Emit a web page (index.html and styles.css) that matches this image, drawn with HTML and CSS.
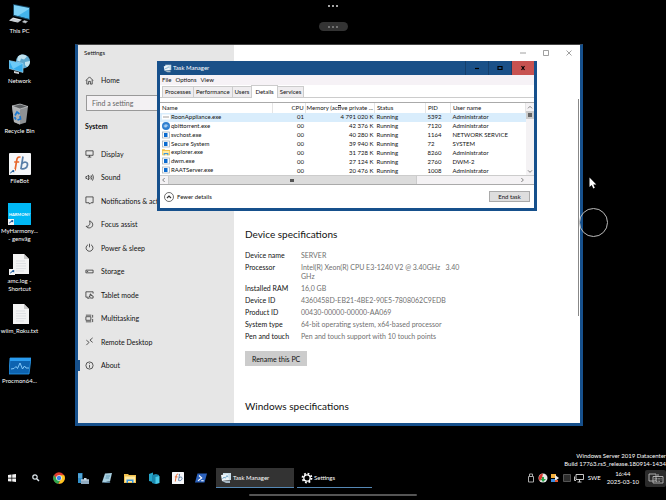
FILE: index.html
```html
<!DOCTYPE html>
<html lang="en">
  <head>
    <meta charset="UTF-8" />
    <meta name="viewport" content="width=device-width, initial-scale=1.0" />
    <title>Remote Desktop</title>
    <link rel="stylesheet" href="styles.css" />
  </head>
  <body>
    <!-- Shared icons -->
    <svg class="sprite" aria-hidden="true">
      <symbol id="i-arrow" viewBox="0 0 6 6">
        <path d="M0 0h6v6H0z" fill="#f4f4f4" />
        <path d="M1.2 5c0-1.600.7-2.500 2-2.700V1.200L5.200 1v2.600l-.9-.5C3.200 3.100 2.200 3.600 1.200 5z" fill="#1b5a9c" />
      </symbol>
      <symbol id="i-fb" viewBox="0 0 22 22">
        <rect width="22" height="22" rx="1" fill="#f6f7f9" />
        <path d="M11.500 4.300c-2.600-1-3.400.7-3.800 3L6 17.500M5.200 9h5" fill="none" stroke="#e8672b" stroke-width="1.700" />
        <path d="M14 3.500l-2 12c3 1.300 6-.5 6.500-3.500.4-3-3-3.800-5.500-1.500" fill="none" stroke="#5a7fa8" stroke-width="1.700" />
      </symbol>
      <symbol id="i-doc" viewBox="0 0 16 20">
        <path d="M0 0h11l5 5v15H0z" fill="#f3f3f3" />
        <path d="M11 0v5h5z" fill="#c9c9c9" />
        <path d="M3 7h9M3 9.500h10M3 12h10M3 14.500h10M3 17h8" stroke="#d6d8dc" stroke-width=".7" />
      </symbol>
      <symbol id="i-exe" viewBox="0 0 8 7">
        <rect x=".5" y=".5" width="7" height="6" fill="#fff" stroke="#9aa9b8" stroke-width=".7" />
        <rect x="2" y="1.500" width="3.500" height="4" fill="#0a6bd0" />
      </symbol>
      <symbol id="i-folder" viewBox="0 0 12 10">
        <path d="M0 1h4l1 1h7v8H0z" fill="#f2c14e" />
        <path d="M1 3.500h10V9H1z" fill="#ffe9a2" />
        <path d="M2.500 10V6.500h7V10H8V8H4v2z" fill="#3a97dd" />
      </symbol>
      <symbol id="i-tm" viewBox="0 0 12 12">
        <path d="M3 1h8v7H3z" fill="#c8dce8" />
        <path d="M1 3l7-1 1 6-7 1z" fill="#eef5f9" />
        <path d="M2.500 7l1.500-2 1.300 1.200L7 3.500l1 1.700" fill="none" stroke="#5d9cc4" stroke-width=".8" />
        <path d="M2 9l4 2h4V8.500z" fill="#a7b8c4" />
      </symbol>
    </svg>

    <main class="desktop">
      <nav class="shortcuts" aria-label="Desktop">
        <a href="#" class="shortcut">
          <svg viewBox="0 0 22 22">
            <path d="M5 2l15 3v11L5 12z" fill="#43b4ec" />
            <path d="M5 2l15 3v1L9 12.800 5 12z" fill="#7fd2f7" />
            <path d="M4.500 1.500L20.500 4.600V16.500L4.500 12.500z" fill="none" stroke="#2878a8" stroke-width=".6" />
            <path d="M4 14.500l9 2.300-4.500 2.700L0 17.500z" fill="#e4e8eb" />
            <path d="M2 17.200l8 1.800M3 16l8 2M15 17.500l3.500 1-2 1.500-3-1z" stroke="#a5adb3" stroke-width=".6" fill="#ccd1d5" />
          </svg>
          <span>This PC</span>
        </a>
        <a href="#" class="shortcut">
          <svg viewBox="0 0 22 22">
            <circle cx="14" cy="8.500" r="7" fill="#5ea8cf" />
            <path d="M9 3.500c3-3 7-2 9 0l-3 3-3-1-1 3-3-1zM16 9l5-1c0 3-1 5-3 6l-2-2z" fill="#c0e2ef" />
            <path d="M0 7.500l14 3v9L0 15.500z" fill="#36aceb" stroke="#b5dff2" stroke-width=".6" />
            <path d="M.5 8l13 2.800L4 16z" fill="#6dcbf8" />
            <path d="M5 18l5 1.300v1.700l-5-1z" fill="#ccd1d5" />
          </svg>
          <span>Network</span>
        </a>
        <a href="#" class="shortcut">
          <svg viewBox="0 0 22 22">
            <path d="M3 3l8-2 8 2.500-2 16-6.500 2L5 19z" fill="#8e9194" />
            <path d="M3 3l8 3v15.500L5 19z" fill="#b1b3b5" />
            <path d="M3 3l8-2 8 2.500L11 6z" fill="#5a5d60" stroke="#d7d9da" stroke-width=".6" />
            <path d="M6 12.500L8 9l2.500 2M11 13l.5 3-3 1M7 16.500L5.500 14" fill="none" stroke="#1b78d0" stroke-width="1.700" />
          </svg>
          <span>Recycle Bin</span>
        </a>
        <a href="#" class="shortcut">
          <svg viewBox="0 0 22 22">
            <use href="#i-fb" width="22" height="22" />
            <use href="#i-arrow" y="16" width="6" height="6" />
          </svg>
          <span>FileBot</span>
        </a>
        <a href="#" class="shortcut">
          <span class="harmony">HARMONY<svg viewBox="0 0 6 6"><use href="#i-arrow" /></svg></span>
          <span>MyHarmony...<br />- genväg</span>
        </a>
        <a href="#" class="shortcut">
          <svg viewBox="0 0 22 22">
            <use href="#i-doc" x="4" y="1" width="16" height="20" />
            <use href="#i-arrow" y="16" width="6" height="6" />
          </svg>
          <span>amc.log -<br />Shortcut</span>
        </a>
        <a href="#" class="shortcut">
          <svg viewBox="0 0 22 22"><use href="#i-doc" x="4" y="1" width="16" height="20" /></svg>
          <span>wiim_Roku.txt</span>
        </a>
        <a href="#" class="shortcut">
          <svg viewBox="0 0 22 22">
            <path d="M1 5h21l-2 16H0z" fill="#0d63b0" stroke="#2a9cf0" stroke-width=".8" />
            <path d="M1 5h21l-.4 3H1z" fill="#2a9cf0" />
            <path d="M2 16l3-.5 2-2 1.500 2L11 10l2.500 6 2-3 1.500 2h3" fill="none" stroke="#8fd3ff" stroke-width=".9" />
          </svg>
          <span>Procmon64...</span>
        </a>
      </nav>

      <!-- Session controls -->
      <div class="session-bar">
        <span class="dots"><i></i><i></i><i></i></span>
        <button class="session-pill dots" aria-label="Session menu"><i></i><i></i><i></i></button>
      </div>

      <!-- Settings window -->
      <section class="window settings">
        <aside class="sidebar">
          <header>Settings</header>
          <a href="#" class="nav-item home">
            <svg viewBox="0 0 10 10"><path d="M1 5l4-4 4 4M2 4.300V9h2V6h2v3h2V4.300" /></svg>Home
          </a>
          <input class="search" type="text" placeholder="Find a setting" aria-label="Find a setting" />
          <h2>System</h2>
          <nav class="nav-list">
            <a href="#" class="nav-item"><svg viewBox="0 0 10 10"><path d="M1 2h8v5H1zM5 7v2M3 9h4" /></svg>Display</a>
            <a href="#" class="nav-item"><svg viewBox="0 0 10 10"><path d="M1 4h1.200L4 2.200v5.600L2.200 6H1zM5.300 3.500q1 1.500 0 3M6.800 2.500q1.700 2.500 0 5M8.300 1.500q2.400 3.500 0 7" /></svg>Sound</a>
            <a href="#" class="nav-item"><svg viewBox="0 0 10 10"><path d="M1 1h8v6.500H6.500L5 9 4.500 7.500H1z" /></svg>Notifications &amp; actions</a>
            <a href="#" class="nav-item"><svg viewBox="0 0 10 10"><path d="M5 1c4 1 5 6 1.200 7.500C4 9.300 2 8.500 1.300 7 5 7.500 6.300 4 5 1z" /></svg>Focus assist</a>
            <a href="#" class="nav-item"><svg viewBox="0 0 10 10"><path d="M3.300 2a3.800 3.800 0 1 0 3.400 0M5 .8v4" /></svg>Power &amp; sleep</a>
            <a href="#" class="nav-item"><svg viewBox="0 0 10 10"><path d="M1 3.500h8v3H1zM2 5h1.500" /></svg>Storage</a>
            <a href="#" class="nav-item"><svg viewBox="0 0 10 10"><path d="M4 8H1V2h8v2M2.500 9.200H5M6 9L4.700 6.800l1 .1V4.500h1V6L9 6.700V9z" /></svg>Tablet mode</a>
            <a href="#" class="nav-item"><svg viewBox="0 0 10 10"><path d="M1 3h5.500v4H1zM1 1.300h6M1 8.700h6M8.500 1v3M8.500 5.500V9" /></svg>Multitasking</a>
            <a href="#" class="nav-item"><svg viewBox="0 0 10 10"><path d="M1.500 3.500L4.500 6 1.500 9M8.500 1L5.500 3.500 8.500 6" /></svg>Remote Desktop</a>
            <a href="#" class="nav-item active"><svg viewBox="0 0 10 10"><circle cx="5" cy="5" r="4" /><path d="M5 4.500v3M5 2.500v1" /></svg>About</a>
          </nav>
        </aside>

        <div class="content">
          <div class="caption">
            <button aria-label="Minimize"><svg viewBox="0 0 6 6"><path d="M0 3h6" /></svg></button>
            <button aria-label="Maximize"><svg viewBox="0 0 6 6"><path d="M.5.5h5v5h-5z" /></svg></button>
            <button aria-label="Close"><svg viewBox="0 0 6 6"><path d="M.5.5l5 5M5.500.5l-5 5" /></svg></button>
          </div>
          <div class="about">
            <h3>Device specifications</h3>
            <dl class="specs">
              <dt>Device name</dt>
              <dd>SERVER</dd>
              <dt>Processor</dt>
              <dd>Intel(R) Xeon(R) CPU E3-1240 V2 @ 3.40GHz &nbsp; 3.40 GHz</dd>
              <dt>Installed RAM</dt>
              <dd>16,0 GB</dd>
              <dt>Device ID</dt>
              <dd>4360458D-EB21-4BE2-90E5-7808062C9EDB</dd>
              <dt>Product ID</dt>
              <dd>00430-00000-00000-AA069</dd>
              <dt>System type</dt>
              <dd>64-bit operating system, x64-based processor</dd>
              <dt>Pen and touch</dt>
              <dd>Pen and touch support with 10 touch points</dd>
            </dl>
            <button class="rename">Rename this PC</button>
            <h3>Windows specifications</h3>
          </div>
          <div class="thin-scroll"></div>
        </div>
      </section>

      <!-- Task Manager window -->
      <section class="window taskmgr">
        <header class="titlebar">
          <svg viewBox="0 0 12 12"><use href="#i-tm" /></svg>
          <span>Task Manager</span>
          <button aria-label="Minimize"><svg viewBox="0 0 6 6"><path d="M1 3.500h4" /></svg></button>
          <button aria-label="Maximize"><svg viewBox="0 0 6 6"><path d="M1 1.500h4v3H1z" /></svg></button>
          <button class="close" aria-label="Close"><svg viewBox="0 0 6 6"><path d="M1.500 1l3 4M4.500 1l-3 4" /></svg></button>
        </header>
        <div class="menubar">
          <button>File</button>
          <button>Options</button>
          <button>View</button>
        </div>
        <div class="tabs" role="tablist">
          <button role="tab">Processes</button>
          <button role="tab">Performance</button>
          <button role="tab">Users</button>
          <button role="tab" class="selected" aria-selected="true">Details</button>
          <button role="tab">Services</button>
        </div>
        <div class="list">
          <table>
            <colgroup>
              <col />
              <col class="c-cpu" />
              <col class="c-mem" />
              <col class="c-status" />
              <col class="c-pid" />
              <col class="c-user" />
            </colgroup>
            <thead>
              <tr>
                <th>Name</th>
                <th class="num">CPU</th>
                <th class="num sorted">Memory (active private ...</th>
                <th>Status</th>
                <th>PID</th>
                <th>User name</th>
              </tr>
            </thead>
            <tbody>
              <tr class="current">
                <td><svg viewBox="0 0 8 7"><path d="M0 1h8v5H0z" fill="#fff" /><path d="M1 3.500h6" stroke="#888" stroke-width=".8" /></svg>RoonAppliance.exe</td>
                <td class="num">01</td>
                <td class="num">4 791 020 K</td>
                <td>Running</td>
                <td>5392</td>
                <td>Administrator</td>
              </tr>
              <tr>
                <td><svg viewBox="0 0 8 8"><circle cx="4" cy="4" r="4" fill="#2f7fd0" /><path d="M2 4a1 1 0 1 0 2 0 1 1 0 1 0-2 0M4 2v3.500M6 4.500a1 1 0 1 0-1.500.5" fill="none" stroke="#cfe6fa" stroke-width=".7" /></svg>qbittorrent.exe</td>
                <td class="num">00</td>
                <td class="num">42 376 K</td>
                <td>Running</td>
                <td>7120</td>
                <td>Administrator</td>
              </tr>
              <tr>
                <td><svg><use href="#i-exe" /></svg>svchost.exe</td>
                <td class="num">00</td>
                <td class="num">40 280 K</td>
                <td>Running</td>
                <td>1164</td>
                <td>NETWORK SERVICE</td>
              </tr>
              <tr>
                <td><svg><use href="#i-exe" /></svg>Secure System</td>
                <td class="num">00</td>
                <td class="num">39 940 K</td>
                <td>Running</td>
                <td>72</td>
                <td>SYSTEM</td>
              </tr>
              <tr>
                <td><svg><use href="#i-folder" /></svg>explorer.exe</td>
                <td class="num">00</td>
                <td class="num">31 728 K</td>
                <td>Running</td>
                <td>8260</td>
                <td>Administrator</td>
              </tr>
              <tr>
                <td><svg><use href="#i-exe" /></svg>dwm.exe</td>
                <td class="num">00</td>
                <td class="num">27 124 K</td>
                <td>Running</td>
                <td>2760</td>
                <td>DWM-2</td>
              </tr>
              <tr>
                <td><svg><use href="#i-exe" /></svg>RAATServer.exe</td>
                <td class="num">00</td>
                <td class="num">20 476 K</td>
                <td>Running</td>
                <td>1008</td>
                <td>Administrator</td>
              </tr>
            </tbody>
          </table>
          <div class="vscroll">
            <svg viewBox="0 0 6 6"><path d="M1.500 4L3 2.500 4.500 4" /></svg>
            <div class="thumb"></div>
            <svg viewBox="0 0 6 6"><path d="M1.500 2.500L3 4l1.500-1.500" /></svg>
          </div>
        </div>
        <div class="hscroll">
          <svg viewBox="0 0 6 6"><path d="M3.500 1.500L2 3l1.500 1.500" /></svg>
          <div class="thumb"></div>
          <svg viewBox="0 0 6 6"><path d="M2.500 1.500L4 3 2.500 4.500" /></svg>
        </div>
        <footer>
          <button class="fewer"><svg viewBox="0 0 10 10"><circle cx="5" cy="5" r="4.500" /><path class="chev" d="M3 6l2-2 2 2" /></svg>Fewer details</button>
          <button class="end-task">End task</button>
        </footer>
      </section>

      <!-- Pointer and touch ring -->
      <svg class="pointer" viewBox="0 0 8 12"><path d="M.5.5v9.500l2.200-2 1.600 3.500 1.500-.7-1.500-3.300h3z" fill="#fff" /></svg>
      <div class="touch-ring"></div>

      <div class="watermark">Windows Server 2019 Datacenter<br />Build 17763.rs5_release.180914-1434</div>

      <footer class="taskbar">
        <div class="pins">
          <button aria-label="Start"><svg viewBox="0 0 12 12"><path d="M2 3l3.500-.5v3.200H2zM6.200 2.400L10 2v3.700H6.200zM2 6.400h3.500v3.200L2 9.200zM6.200 6.400H10V10l-3.800-.4z" fill="#f2f2f2" /></svg></button>
          <button aria-label="Search"><svg viewBox="0 0 12 12"><circle cx="5" cy="5" r="2.200" fill="none" stroke="#dfe8ee" stroke-width="1.200" /><path d="M6.700 6.700L9 9" stroke="#dfe8ee" stroke-width="1.500" /></svg></button>
          <button aria-label="Chrome"><svg viewBox="0 0 12 12"><circle cx="6" cy="6" r="5.800" fill="#e23b2e" /><path d="M6 6h-3L1 3a5.800 5.800 0 0 0 4.200 8.700L8 7z" fill="#2da94f" /><path d="M6 3.300h5.200A5.800 5.800 0 0 1 5.500 11.800L8.300 7z" fill="#fcc61f" /><circle cx="6" cy="6" r="2.800" fill="#fff" /><circle cx="6" cy="6" r="2.200" fill="#3a7fe8" /></svg></button>
          <button aria-label="Server Manager"><svg viewBox="0 0 12 12"><path d="M1 1h4.500v10H1z" fill="#318fc9" /><path d="M1 3h4M1 5h4" stroke="#a5d7f2" stroke-width=".6" /><path d="M4 7.500h8V12H4z" fill="#91abc0" /><path d="M4 7.500h8v1H4zM7 6h2.500v1.500H7z" fill="#cad9e5" /></svg></button>
          <button aria-label="Notepad"><svg viewBox="0 0 12 12"><path d="M4 1.500L11 1 9 9.500 1 10.500z" fill="#a8cfe0" /><path d="M5 4h4M4.500 6H8" stroke="#4583a0" stroke-width=".7" /><path d="M1 10.500L8 9.500 9.500 11H3z" fill="#567c96" /></svg></button>
          <button aria-label="File Explorer"><svg viewBox="0 0 12 10"><use href="#i-folder" /></svg></button>
          <button aria-label="Azure tools"><svg viewBox="0 0 12 12"><path d="M1 2l4-1.500V10L1 9z" fill="#26a5c9" /><path d="M4 3l4-1 3 1v8l-4 1-3-1z" fill="#1b88ad" /><path d="M7.500 5L11.500 4v7l-4 1z" fill="#49cbea" /></svg></button>
          <button aria-label="FileBot"><svg viewBox="0 0 22 22"><use href="#i-fb" /></svg></button>
          <button aria-label="PowerShell"><svg viewBox="0 0 12 12"><path d="M2.500 1.500H12L9.500 10.500H0z" fill="#2c62bd" /><path d="M4 3.500L6.700 6 3 8.700M6.200 8.800h2.500" fill="none" stroke="#fff" stroke-width="1.100" /></svg></button>
        </div>
        <button class="task active"><svg viewBox="0 0 12 12"><use href="#i-tm" /></svg>Task Manager</button>
        <button class="task"><svg viewBox="0 0 12 12"><circle cx="6" cy="6" r="4.500" fill="none" stroke="#fff" stroke-width="1.800" stroke-dasharray="1.770" /><circle cx="6" cy="6" r="3.200" fill="none" stroke="#fff" stroke-width="1.300" /></svg>Settings</button>
        <div class="tray">
          <svg viewBox="0 0 10 10"><path d="M3.500 1h3v2.500h-3zM2.500 3.500h5V9h-5z" fill="none" stroke="#aaa" /></svg>
          <svg viewBox="0 0 10 10"><circle cx="5" cy="5" r="4.500" fill="#e7e7e7" /><path d="M5 .5a4.500 4.500 0 0 0-3 7.500l2-3z" fill="#d8362c" /><path d="M4 4h2v2h2L5 9 2.500 6H4z" fill="#26a248" /></svg>
          <svg viewBox="0 0 10 10"><path d="M1 1h5v4H1z" fill="#f3b03c" /><path d="M5 2l4 3-4 3z" fill="#e9e9e9" /><path d="M1 6h4v3H1z" fill="#3b8be0" /><path d="M5 7h3v2H5z" fill="#e4572e" /></svg>
          <svg viewBox="0 0 10 10"><path d="M1.500 1.500h7v7h-7z" fill="#2d2d2d" stroke="#666" stroke-width=".8" /></svg>
          <svg viewBox="0 0 10 10"><path d="M2 1.500h7.500v5H2zM5.500 6.500v2.500M3.500 9h4M.5 3.500v4H2" fill="none" stroke="#ddd" stroke-width=".9" /></svg>
          <span>SWE</span>
          <time>16:44<br />2025-03-10</time>
          <button class="keyboard" aria-label="Keyboard"><svg viewBox="0 0 16 12"><path d="M1 2h7v7H1zM5 4.500h10V11H5zM10 2v2.500" fill="none" stroke="#bbb" stroke-width=".9" /><path d="M6.500 6.500h7M6.500 8h7M8 9.500h4" stroke="#bbb" stroke-width=".8" stroke-dasharray="1 .6" /></svg></button>
        </div>
      </footer>
      <div class="home-bar"></div>
    </main>
  </body>
</html>
```

FILE: styles.css
```css
* {
  box-sizing: border-box;
}

body {
  margin: 0;
  background: #000;
  color: #111;
  font-family: Lato, "Open Sans", sans-serif;
  font-size: 6px;
  line-height: 8px;
}

button,
input {
  font: inherit;
  color: inherit;
  border: none;
  background: none;
  padding: 0;
  margin: 0;
}

a {
  color: inherit;
  text-decoration: none;
}

svg {
  display: block;
  flex: none;
}

.sprite {
  position: absolute;
  width: 0;
  height: 0;
}

.desktop {
  position: relative;
  height: 100vh;
  min-height: 500px;
  overflow: hidden;
}

/* Desktop shortcuts */
.shortcuts {
  display: grid;
  grid-auto-rows: 50px;
  width: 39px;
  padding-top: 3px;
}

.shortcut {
  display: flex;
  flex-direction: column;
  align-items: center;
  gap: 2px;
  color: #fff;
  text-align: center;
  white-space: nowrap;
}

.shortcut > svg {
  width: 22px;
  height: 22px;
}

.harmony {
  display: flex;
  flex-direction: column;
  align-items: center;
  justify-content: flex-end;
  width: 23px;
  height: 22px;
  background: #00b8f5;
  font-size: 4px;
  font-weight: bold;
}

.harmony svg {
  width: 6px;
  height: 6px;
  align-self: flex-start;
}

/* Session controls */
.session-bar {
  position: absolute;
  top: 5px;
  left: 0;
  right: 0;
  display: flex;
  flex-direction: column;
  align-items: center;
  gap: 15px;
}

.dots {
  display: flex;
  align-items: center;
  justify-content: center;
  gap: 2px;
}

.dots i {
  width: 2px;
  height: 2px;
  border-radius: 50%;
  background: #ddd;
}

.session-pill {
  width: 29px;
  height: 9px;
  border-radius: 5px;
  background: #333;
}

.session-pill i {
  background: #888;
}

.window {
  position: absolute;
  display: flex;
}

/* Settings */
.settings {
  top: 44px;
  left: 75px;
  right: 83px;
  bottom: 74px;
  border: 3px solid #16508c;
  border-top: 1px solid #444;
  background: #fff;
}

.sidebar {
  display: flex;
  flex-direction: column;
  width: 156px;
  background: #e6e6e6;
}

.sidebar header {
  padding: 4px 6px 14px;
}

.nav-item {
  display: flex;
  align-items: center;
  gap: 7px;
  padding-left: 7px;
  font-size: 7px;
  white-space: nowrap;
}

.nav-item svg {
  width: 9px;
  height: 9px;
}

.nav-item path,
.nav-item circle {
  fill: none;
  stroke: #222;
  stroke-width: 0.8;
}

.home {
  height: 18px;
}

.search {
  height: 16px;
  margin: 6px 8px 0;
  padding: 0 5px;
  border: 1px solid #999;
  background: #f3f1f3;
  font-size: 7px;
}

.search::placeholder {
  color: #666;
  opacity: 1;
}

h2 {
  margin: 10px 7px 11px;
  font-size: 7px;
  line-height: 10px;
  font-weight: bold;
}

.nav-list {
  display: grid;
  grid-auto-rows: 1fr;
  height: 235px;
}

.active {
  position: relative;
}

.nav-item.active::before {
  content: "";
  position: absolute;
  left: 0;
  top: 6px;
  bottom: 6px;
  width: 2px;
  background: #16508c;
}

.content {
  position: relative;
  flex: 1;
  overflow: hidden;
}

.caption {
  display: flex;
  justify-content: flex-end;
  height: 16px;
}

.caption button {
  display: flex;
  align-items: center;
  justify-content: center;
  width: 23px;
}

.caption svg {
  width: 6px;
  height: 6px;
}

.caption path {
  fill: none;
  stroke: #888;
  stroke-width: 0.8;
}

.about {
  padding: 167px 10px 0 11px;
}

h3 {
  margin: 0;
  font-size: 10px;
  line-height: 12px;
  font-weight: 400;
}

.specs {
  display: grid;
  grid-template-columns: 53px 160px;
  column-gap: 3px;
  row-gap: 3px;
  margin: 11px 0 10px;
  font-size: 7px;
  line-height: 9px;
}

.specs dd {
  margin: 0;
  color: #707070;
}

.rename {
  height: 15px;
  margin-bottom: 34px;
  padding: 0 7px;
  background: #ccc;
  font-size: 7px;
}

.thin-scroll {
  position: absolute;
  top: 54px;
  right: 1px;
  width: 1px;
  height: 217px;
  background: #888;
}

/* Task Manager */
.taskmgr {
  top: 61px;
  left: 157px;
  right: 129px;
  flex-direction: column;
  border: 3px solid #16508c;
  border-top: none;
  background: #fff;
}

.titlebar {
  display: flex;
  align-items: center;
  height: 14px;
  background: #1a5088;
  color: #fff;
  padding-left: 3px;
}

.titlebar > svg {
  width: 9px;
  height: 9px;
}

.titlebar span {
  flex: 1;
  padding-left: 1px;
}

.titlebar button {
  display: flex;
  align-items: center;
  justify-content: center;
  align-self: stretch;
  width: 23px;
  border-left: 1px solid #153f6c;
}

.titlebar button svg {
  width: 6px;
  height: 6px;
}

.titlebar .close {
  background: #c75250;
}

.titlebar button path {
  fill: none;
  stroke: #000;
  stroke-width: 1.2;
}

.menubar {
  display: flex;
  gap: 4px;
  height: 10px;
  padding-left: 2px;
  background: #f6f2f6;
}

.tabs {
  display: flex;
  align-items: flex-end;
  height: 13px;
  padding-left: 2px;
  border-bottom: 1px solid #ccc;
}

.tabs button {
  height: 11px;
  padding: 0 2px;
  border: 1px solid #ccc;
  border-bottom: none;
  margin-right: -1px;
  background: #efedef;
}

.tabs .selected {
  height: 13px;
  padding: 0 3px;
  margin-bottom: -1px;
  background: #fff;
}

.list {
  display: flex;
  margin-top: 4px;
  border-top: 1px solid #aaa;
}

table {
  flex: 1;
  height: 72px;
  table-layout: fixed;
  border-collapse: collapse;
}

.c-cpu {
  width: 33px;
}

.c-mem {
  width: 67px;
}

.c-status {
  width: 51px;
}

.c-pid {
  width: 25px;
}

.c-user {
  width: 75px;
}

th,
td {
  padding: 0 2px;
  font-weight: 400;
  text-align: left;
  white-space: nowrap;
}

th {
  height: 10px;
  border-right: 1px solid #e5e5e5;
}

.num {
  padding: 0 1px;
  text-align: right;
}

.sorted {
  background: linear-gradient(#333, #333) center 2px / 3px 1px no-repeat;
}

td:first-child {
  display: flex;
  align-items: center;
  gap: 1px;
}

td svg {
  width: 8px;
  height: 8px;
}

.current {
  background: #d9edfc;
}

.vscroll {
  display: flex;
  flex-direction: column;
  width: 8px;
  background: #f4f2f4;
}

.vscroll .thumb {
  height: 8px;
  margin-bottom: auto;
  border: 2px solid #ccc;
  background: #666;
}

.vscroll svg,
.hscroll svg {
  width: 8px;
  height: 8px;
  fill: none;
  stroke: #777;
  stroke-width: 0.7;
}

.hscroll {
  display: flex;
  height: 10px;
  padding-right: 8px;
  align-items: center;
  border-top: 1px solid #ccc;
  border-bottom: 1px solid #aaa;
  background: #f4f2f4;
}

.hscroll .thumb {
  width: 68%;
  height: 8px;
  margin-right: auto;
  border: solid #ccc;
  border-width: 0 1px;
  background: linear-gradient(#555, #555) center / 4px 3px no-repeat #dcdcdc;
}

.taskmgr footer {
  display: flex;
  align-items: center;
  justify-content: space-between;
  height: 23px;
  padding: 0 4px;
}

.fewer {
  display: flex;
  align-items: center;
  gap: 3px;
}

.fewer svg {
  width: 10px;
  height: 10px;
  fill: none;
  stroke: #333;
  stroke-width: 0.7;
}

.fewer .chev {
  stroke-width: 1.2;
}

.end-task {
  width: 41px;
  height: 11px;
  border: 1px solid #aaa;
  background: #dedede;
}

/* Overlays */
.pointer {
  position: absolute;
  top: 177px;
  left: 589px;
  width: 8px;
  height: 12px;
}

.touch-ring {
  position: absolute;
  top: 208px;
  left: 579px;
  width: 29px;
  height: 29px;
  border: 1px solid #bbb;
  border-radius: 50%;
}

.watermark {
  position: absolute;
  right: 0;
  bottom: 32px;
  color: #fff;
  text-align: right;
}

/* Taskbar */
.taskbar {
  position: absolute;
  left: 0;
  right: 0;
  bottom: 12px;
  display: flex;
  align-items: stretch;
  gap: 3px;
  height: 20px;
  color: #fff;
}

.pins {
  display: flex;
  width: 213px;
}

.pins button {
  display: flex;
  align-items: center;
  justify-content: center;
  width: 24px;
}

.pins svg,
.task svg {
  width: 12px;
  height: 12px;
}

.task {
  display: flex;
  align-items: center;
  gap: 1px;
  width: 75px;
  padding-left: 4px;
  border-bottom: 1px solid #5588b5;
}

.task.active {
  width: 78px;
  background: #333;
}

.tray {
  display: flex;
  align-items: center;
  gap: 2px;
  margin-left: auto;
}

.tray svg {
  width: 10px;
  height: 10px;
}

.tray span {
  margin-left: 2px;
}

.tray time {
  margin: 0 4px;
  text-align: center;
}

.tray .keyboard {
  display: flex;
  align-items: center;
  justify-content: center;
  width: 21px;
  height: 17px;
  border-radius: 2px;
  background: #2b2b2b;
}

.keyboard svg {
  width: 16px;
  height: 12px;
}

.home-bar {
  position: absolute;
  left: 0;
  right: 0;
  bottom: 4px;
  width: 168px;
  height: 2px;
  margin: 0 auto;
  border-radius: 1px;
  background: #555;
}
```
